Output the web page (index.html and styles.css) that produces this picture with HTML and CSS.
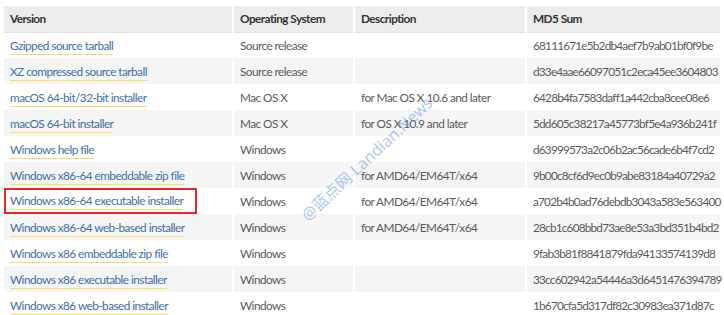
FILE: index.html
```html
<!DOCTYPE html>
<html>
<head>
    <title>Python Releases</title>
    <link rel="stylesheet" href="styles.css">
</head>
<body>
    <div class="files">
        <table class="file-table">
            <thead>
                <tr>
                    <th class="col-version">Version</th>
                    <th class="col-os">Operating System</th>
                    <th class="col-desc">Description</th>
                    <th class="col-md5">MD5 Sum</th>
                </tr>
            </thead>
            <tbody>
                <tr>
                    <td><a href="#">Gzipped source tarball</a></td>
                    <td>Source release</td>
                    <td></td>
                    <td class="md5">68111671e5b2db4aef7b9ab01bf0f9be</td>
                </tr>
                <tr>
                    <td><a href="#">XZ compressed source tarball</a></td>
                    <td>Source release</td>
                    <td></td>
                    <td class="md5">d33e4aae66097051c2eca45ee3604803</td>
                </tr>
                <tr>
                    <td><a href="#">macOS 64-bit/32-bit installer</a></td>
                    <td>Mac OS X</td>
                    <td>for Mac OS X 10.6 and later</td>
                    <td class="md5">6428b4fa7583daff1a442cba8cee08e6</td>
                </tr>
                <tr>
                    <td><a href="#">macOS 64-bit installer</a></td>
                    <td>Mac OS X</td>
                    <td>for OS X 10.9 and later</td>
                    <td class="md5">5dd605c38217a45773bf5e4a936b241f</td>
                </tr>
                <tr>
                    <td><a href="#">Windows help file</a></td>
                    <td>Windows</td>
                    <td></td>
                    <td class="md5">d63999573a2c06b2ac56cade6b4f7cd2</td>
                </tr>
                <tr>
                    <td><a href="#">Windows x86-64 embeddable zip file</a></td>
                    <td>Windows</td>
                    <td>for AMD64/EM64T/x64</td>
                    <td class="md5">9b00c8cf6d9ec0b9abe83184a40729a2</td>
                </tr>
                <tr>
                    <td class="highlighted"><span class="mark"><a href="#">Windows x86-64 executable installer</a></span></td>
                    <td>Windows</td>
                    <td>for AMD64/EM64T/x64</td>
                    <td class="md5">a702b4b0ad76debdb3043a583e563400</td>
                </tr>
                <tr>
                    <td><a href="#">Windows x86-64 web-based installer</a></td>
                    <td>Windows</td>
                    <td>for AMD64/EM64T/x64</td>
                    <td class="md5">28cb1c608bbd73ae8e53a3bd351b4bd2</td>
                </tr>
                <tr>
                    <td><a href="#">Windows x86 embeddable zip file</a></td>
                    <td>Windows</td>
                    <td></td>
                    <td class="md5">9fab3b81f8841879fda94133574139d8</td>
                </tr>
                <tr>
                    <td><a href="#">Windows x86 executable installer</a></td>
                    <td>Windows</td>
                    <td></td>
                    <td class="md5">33cc602942a54446a3d6451476394789</td>
                </tr>
                <tr>
                    <td><a href="#">Windows x86 web-based installer</a></td>
                    <td>Windows</td>
                    <td></td>
                    <td class="md5">1b670cfa5d317df82c30983ea371d87c</td>
                </tr>
            </tbody>
        </table>
        <div class="watermark">@蓝点网 Landian.News</div>
    </div>
</body>
</html>
```
FILE: styles.css
```css
body {
    margin: 0;
    padding: 6px 4px 0 4px;
    background-color: white;
    font-family: Lato, "Noto Sans CJK SC", sans-serif;
    font-size: 11.8px;
    letter-spacing: -0.55px;
    color: #5a5a5a;
}

.files {
    position: relative;
}

.file-table {
    border-collapse: collapse;
    width: 716px;
    table-layout: fixed;
}

.col-version { width: 229px; }
.col-os { width: 121px; }
.col-desc { width: 172px; }
.col-md5 { width: 194px; }

th, td {
    height: 26px;
    padding: 0 6px;
    text-align: left;
    white-space: nowrap;
    border-left: 2px solid white;
    box-sizing: border-box;
}

th:first-child, td:first-child {
    border-left: none;
}

th {
    background-color: #ececec;
    color: #333;
    font-weight: bold;
    border-bottom: 1px solid #e2e2e2;
}

tbody tr:nth-child(even) td {
    background-color: #f5f5f5;
}

.md5 {
    letter-spacing: -0.8px;
}

a {
    color: #3f6fa6;
    text-decoration: none;
    border-bottom: 1px solid #ffd96a;
    padding-bottom: 1px;
}

.highlighted {
    padding: 0;
}

.mark {
    display: inline-block;
    border: 2px solid #e8262a;
    padding: 3px 12px 4px 4px;
}

.watermark {
    position: absolute;
    left: 276px;
    top: 140px;
    transform: rotate(-43deg);
    color: rgba(90, 145, 225, 0.5);
    font-family: "Noto Sans", "Noto Sans CJK SC", sans-serif;
    font-size: 16px;
    letter-spacing: 0;
    white-space: nowrap;
}
```
